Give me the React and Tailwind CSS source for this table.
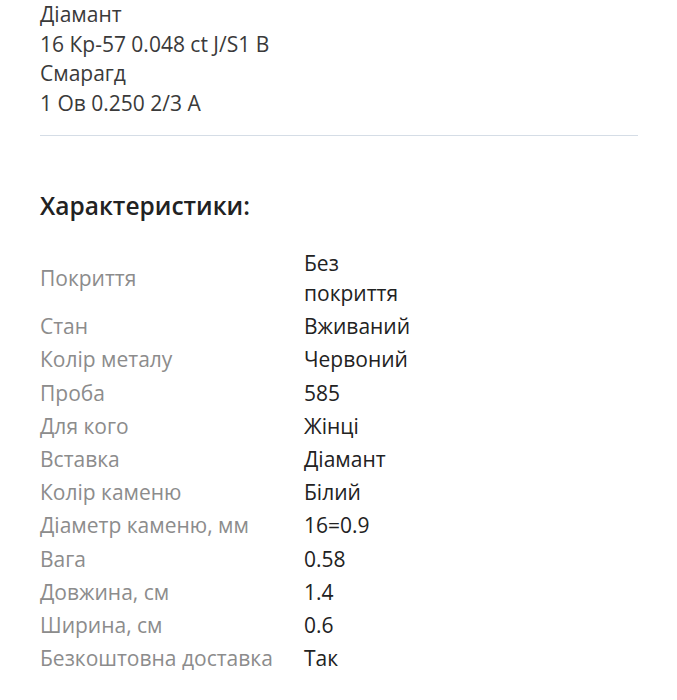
export default function App() {
  const rows = [
    ["Стан", "Вживаний"],
    ["Колір металу", "Червоний"],
    ["Проба", "585"],
    ["Для кого", "Жінці"],
    ["Вставка", "Діамант"],
    ["Колір каменю", "Білий"],
    ["Діаметр каменю, мм", "16=0.9"],
    ["Вага", "0.58"],
    ["Довжина, см", "1.4"],
    ["Ширина, см", "0.6"],
    ["Безкоштовна доставка", "Так"],
  ];
  return (
    <div className="bg-white w-[677px] h-[700px] overflow-hidden px-[40px]" style={{ fontFamily: '"Open Sans", sans-serif' }}>
      <div className="text-[21px] leading-[29.5px] text-[#3a3a3a]">
        <div>Діамант</div>
        <div>16 Кр-57 0.048 ct J/S1 B</div>
        <div>Смарагд</div>
        <div>1 Ов 0.250 2/3 A</div>
      </div>
      <div className="mt-[17px] h-[1px] w-[598px] bg-[#d5dde6]" />
      <div className="mt-[54px] text-[24.5px] leading-[32px] font-semibold text-[#222]">Характеристики:</div>
      <div className="mt-[24.5px] grid grid-cols-[264px_122px] text-[21px] leading-[30px]">
        <div className="flex items-center py-[1.6px] text-[#8c8c8c]">Покриття</div>
        <div className="py-[1.6px] text-[#222]">Без покриття</div>
        {rows.map(([k, v]) => (
          <div key={k} className="contents">
            <div className="py-[1.6px] text-[#8c8c8c]">{k}</div>
            <div className="py-[1.6px] text-[#222]">{v}</div>
          </div>
        ))}
      </div>
    </div>
  );
}
